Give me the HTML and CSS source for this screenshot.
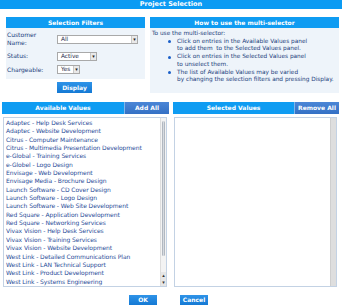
FILE: index.html
```
<!DOCTYPE html>
<html>
<head>
<meta charset="utf-8">
<link rel="stylesheet" href="styles.css">
</head>
<body>
<div class="title">Project Selection</div>
<div class="top">
  <div class="left-col">
    <div class="panel filters">
      <div class="hdr">Selection Filters</div>
      <div class="frow">
        <div class="lbl">Customer<br>Name:</div>
        <div class="sel w81"><span>All</span><i class="arr">&#9662;</i></div>
      </div>
      <div class="frow">
        <div class="lbl">Status:</div>
        <div class="sel w40"><span>Active</span><i class="arr">&#9662;</i></div>
      </div>
      <div class="frow">
        <div class="lbl">Chargeable:</div>
        <div class="sel w23"><span>Yes</span><i class="arr">&#9662;</i></div>
      </div>
    </div>
    <div class="display-row"><button class="btn display">Display</button></div>
  </div>
  <div class="panel help">
    <div class="hdr">How to use the multi-selector</div>
    <div class="helptext">
      <div class="intro">To use the multi-selector:</div>
      <ul>
        <li>Click on entries in the Available Values panel<br>to add them&nbsp; to the Selected Values panel.</li>
        <li>Click on entries in the Selected Values panel<br>to unselect them.</li>
        <li>The list of Available Values may be varied<br>by changing the selection filters and pressing Display.</li>
      </ul>
    </div>
  </div>
</div>
<div class="bottom">
  <div class="col">
    <div class="lhdr"><div class="ltitle">Available Values</div><div class="lbtn">Add All</div></div>
    <div class="list">
      <div class="items">
        <div>Adaptec - Help Desk Services</div>
        <div>Adaptec - Website Development</div>
        <div>Citrus - Computer Maintenance</div>
        <div>Citrus - Multimedia Presentation Development</div>
        <div>e-Global - Training Services</div>
        <div>e-Globel - Logo Design</div>
        <div>Envisage - Web Development</div>
        <div>Envisage Media - Brochure Design</div>
        <div>Launch Software - CD Cover Design</div>
        <div>Launch Software - Logo Design</div>
        <div>Launch Software - Web Site Development</div>
        <div>Red Square - Application Development</div>
        <div>Red Square - Networking Services</div>
        <div>Vivax Vision - Help Desk Services</div>
        <div>Vivax Vision - Training Services</div>
        <div>Vivax Vision - Website Development</div>
        <div>West Link - Detailed Communications Plan</div>
        <div>West Link - LAN Technical Support</div>
        <div>West Link - Product Development</div>
        <div>West Link - Systems Engineering</div>
      </div>
      <div class="sbar">
        <div class="sb-cap"></div>
        <div class="sb-thumb"></div>
        <div class="sb-track"></div>
        <div class="sb-btn">&#9652;</div>
        <div class="sb-btn">&#9662;</div>
      </div>
    </div>
  </div>
  <div class="col">
    <div class="lhdr"><div class="ltitle">Selected Values</div><div class="lbtn rm">Remove All</div></div>
    <div class="list">
      <div class="items"></div>
      <div class="sbar empty"></div>
    </div>
  </div>
</div>
<div class="actions">
  <button class="btn ok">OK</button>
  <button class="btn cancel">Cancel</button>
</div>
</body>
</html>
```
FILE: styles.css
```
* { box-sizing: border-box; }
html, body { margin: 0; padding: 0; background: #fff; }
body {
  width: 342px; height: 308px; overflow: hidden;
  font-family: "DejaVu Sans", Verdana, sans-serif;
  font-size: 6px; line-height: 1.2;
  color: #22407a;
}
.title {
  height: 9px; background: #0b9bf3; color: #fff;
  font-size: 6.5px; font-weight: bold; line-height: 9px; text-align: center;
}
.top {
  display: flex; gap: 5px;
  padding: 8px 3px 0 6px;
  height: 93px;
}
.left-col { width: 139px; display: flex; flex-direction: column; }
.panel { background: #eef4fa; }
.filters { height: 62px; }
.hdr {
  height: 11px; background: #0f9cf2; color: #fff;
  font-size: 6px; font-weight: bold; line-height: 11px; text-align: center;
}
.frow {
  display: flex; align-items: center;
  padding-left: 1px;
}
.frow:nth-of-type(2) { height: 19px; padding-top: 3px; }
.frow:nth-of-type(3) { height: 15px; padding-top: 3px; }
.frow:nth-of-type(4) { height: 14px; padding-top: 1px; }
.lbl { width: 50px; font-size: 6px; line-height: 8px; color: #22407a; }
.sel {
  height: 9px; border: 1px solid #a9a9a9; background: #fff;
  display: flex; align-items: center; justify-content: space-between;
  font-size: 5.8px; padding-left: 3px; color: #1e2a4a;
}
.w81 { width: 81px; }
.w40 { width: 40px; }
.w23 { width: 23px; }
.arr {
  font-style: normal; font-size: 5px; width: 6px; height: 7px; line-height: 7px;
  text-align: center; background: #e9e9e9; border-left: 1px solid #c8c8c8; color: #222;
}
.display-row { display: flex; padding: 3px 0 0 51px; }
.btn {
  font-family: inherit; border: 0; padding: 0; margin: 0;
  background: linear-gradient(#2e93e8, #1479d4);
  color: #fff; font-weight: bold; font-size: 6px;
  height: 11px; line-height: 11px; text-align: center;
}
.display { width: 35px; }
.help { flex: 1; height: 76px; }
.helptext { padding: 2px 0 0 2px; font-size: 5.8px; line-height: 7.3px; color: #22407a; }
.helptext ul { margin: 0; padding: 0 0 0 25px; list-style: none; }
.helptext li { position: relative; margin-top: 0.7px; }
.helptext li::before {
  content: ""; position: absolute; left: -9px; top: 2.5px;
  width: 3px; height: 3px; border-radius: 50%; background: #1a5fc8;
}
.bottom {
  display: flex; gap: 4px;
  padding: 0 3px 0 2px;
}
.col { flex: 1; display: flex; flex-direction: column; }
.col:first-child { flex: 0 0 167px; }
.lhdr { display: flex; height: 12px; background: #0f9cf2; }
.ltitle {
  flex: 1; color: #fff; font-size: 6px; font-weight: bold;
  line-height: 12px; text-align: center;
}
.lbtn {
  width: 45px; background: linear-gradient(#4b86d6, #3470c4); color: #fff;
  font-size: 6px; font-weight: bold; line-height: 12px; text-align: center;
  border-left: 1px solid #7fb6ea;
}
.list {
  margin: 3px 2px 0 1px; height: 170px;
  border: 1px solid #c3d2e4; background: #fff;
  display: flex;
}
.items {
  flex: 1; padding: 1px 0 0 2px;
  font-size: 6px; letter-spacing: -0.07px; line-height: 8.35px; color: #2a4c98;
  white-space: nowrap; overflow: hidden;
}
.sbar {
  width: 6px; display: flex; flex-direction: column;
  background: #f3f3f3; border-left: 1px solid #ddd;
}
.sb-cap { height: 3px; }
.sb-thumb {
  height: 135px; margin: 0 1px; border-radius: 2px;
  background: linear-gradient(90deg, #9ea6b0, #d7dbe0 50%, #9ea6b0);
}
.sb-track { flex: 1; }
.sb-btn { height: 7px; font-size: 5px; line-height: 7px; text-align: center; color: #333; background: #e6e6e6; }
.sbar.empty { background: #dedede; border-left: 1px solid #cfcfcf; }
.actions {
  display: flex; justify-content: center; gap: 23px;
  padding: 8px 0 0 0;
  margin-left: -5px;
}
.ok, .cancel { width: 28px; height: 10px; line-height: 10px; }
```
